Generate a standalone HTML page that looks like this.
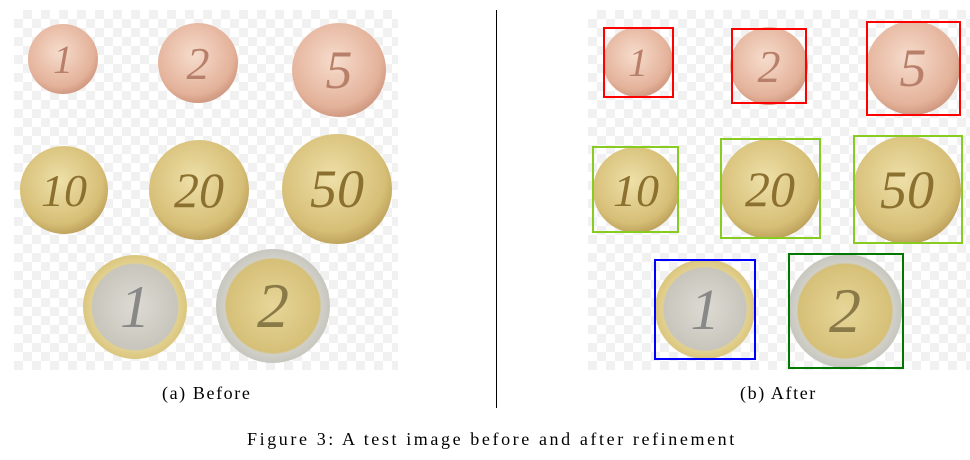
<!DOCTYPE html><html><head><style>
body{margin:0;width:970px;height:460px;background:#fff;position:relative;overflow:hidden;font-family:"Liberation Serif",serif}
.p{position:absolute;top:10px;width:384px;height:360px;background-color:#fff;background-image:linear-gradient(45deg,#f1f1f1 25%,transparent 25%,transparent 75%,#f1f1f1 75%),linear-gradient(45deg,#f1f1f1 25%,transparent 25%,transparent 75%,#f1f1f1 75%);background-size:18px 18px;background-position:0 0,9px 9px}
.c{position:absolute;border-radius:50%;box-sizing:border-box;display:flex;align-items:center;justify-content:center;font-style:italic;overflow:hidden}
.cu{background:radial-gradient(circle at 45% 40%,#f6dccc,#e4b29a 60%,#b87a62 92%,#7a4434);color:#b8806a}
.au{background:radial-gradient(circle at 45% 40%,#eee0a8,#d6be76 60%,#a48440 90%,#5c4418);color:#8c7030}
.e1{background:radial-gradient(circle,#dcdad2 0,#c8c6bc 58%,#e2d08e 60%,#d0b868 85%,#8a7034 100%);color:#888;}
.e2{background:radial-gradient(circle,#e6d698 0,#d6c078 58%,#d0d0c8 60%,#b8b8b0 88%,#707068 100%);color:#8a7a48;}
.b{position:absolute;box-sizing:border-box;z-index:5}
.t{position:absolute;font-size:18px;color:#000;letter-spacing:1.6px;white-space:nowrap}
</style></head><body>
<div class="p" style="left:14px"></div>
<div class="p" style="left:588px;width:382px"></div>
<div style="position:absolute;left:496px;top:10px;width:1px;height:398px;background:#000"></div>

<div class="c cu" style="left:28px;top:24px;width:70px;height:70px;font-size:40px">1</div>
<div class="c cu" style="left:158px;top:23px;width:80px;height:80px;font-size:46px">2</div>
<div class="c cu" style="left:292px;top:23px;width:94px;height:94px;font-size:54px">5</div>
<div class="c au" style="left:20px;top:146px;width:88px;height:88px;font-size:46px">10</div>
<div class="c au" style="left:149px;top:140px;width:100px;height:100px;font-size:50px">20</div>
<div class="c au" style="left:282px;top:134px;width:110px;height:110px;font-size:54px">50</div>
<div class="c e1" style="left:83px;top:255px;width:104px;height:104px;font-size:60px">1</div>
<div class="c e2" style="left:216px;top:249px;width:114px;height:114px;font-size:64px">2</div>

<div class="c cu" style="left:603px;top:27px;width:70px;height:70px;font-size:40px">1</div>
<div class="c cu" style="left:730px;top:27px;width:78px;height:78px;font-size:46px">2</div>
<div class="c cu" style="left:866px;top:21px;width:94px;height:94px;font-size:54px">5</div>
<div class="c au" style="left:593px;top:147px;width:86px;height:86px;font-size:46px">10</div>
<div class="c au" style="left:720px;top:139px;width:100px;height:100px;font-size:50px">20</div>
<div class="c au" style="left:853px;top:136px;width:108px;height:108px;font-size:54px">50</div>
<div class="c e1" style="left:655px;top:259px;width:100px;height:100px;font-size:58px">1</div>
<div class="c e2" style="left:788px;top:254px;width:114px;height:114px;font-size:64px">2</div>

<div class="b" style="left:603px;top:27px;width:71px;height:71px;border:2px solid #f00"></div>
<div class="b" style="left:731px;top:28px;width:76px;height:76px;border:2px solid #f00"></div>
<div class="b" style="left:866px;top:21px;width:95px;height:95px;border:2px solid #f00"></div>
<div class="b" style="left:592px;top:146px;width:87px;height:87px;border:2px solid #8c2"></div>
<div class="b" style="left:720px;top:138px;width:101px;height:101px;border:2px solid #8c2"></div>
<div class="b" style="left:853px;top:135px;width:110px;height:109px;border:2px solid #8c2"></div>
<div class="b" style="left:654px;top:259px;width:102px;height:101px;border:2px solid #00f"></div>
<div class="b" style="left:788px;top:253px;width:116px;height:116px;border:2px solid #070"></div>

<div class="t" style="left:162px;top:383px">(a) Before</div>
<div class="t" style="left:740px;top:383px">(b) After</div>
<div class="t" style="left:247px;top:429px;letter-spacing:2.6px">Figure 3: A test image before and after refinement</div>
</body></html>
